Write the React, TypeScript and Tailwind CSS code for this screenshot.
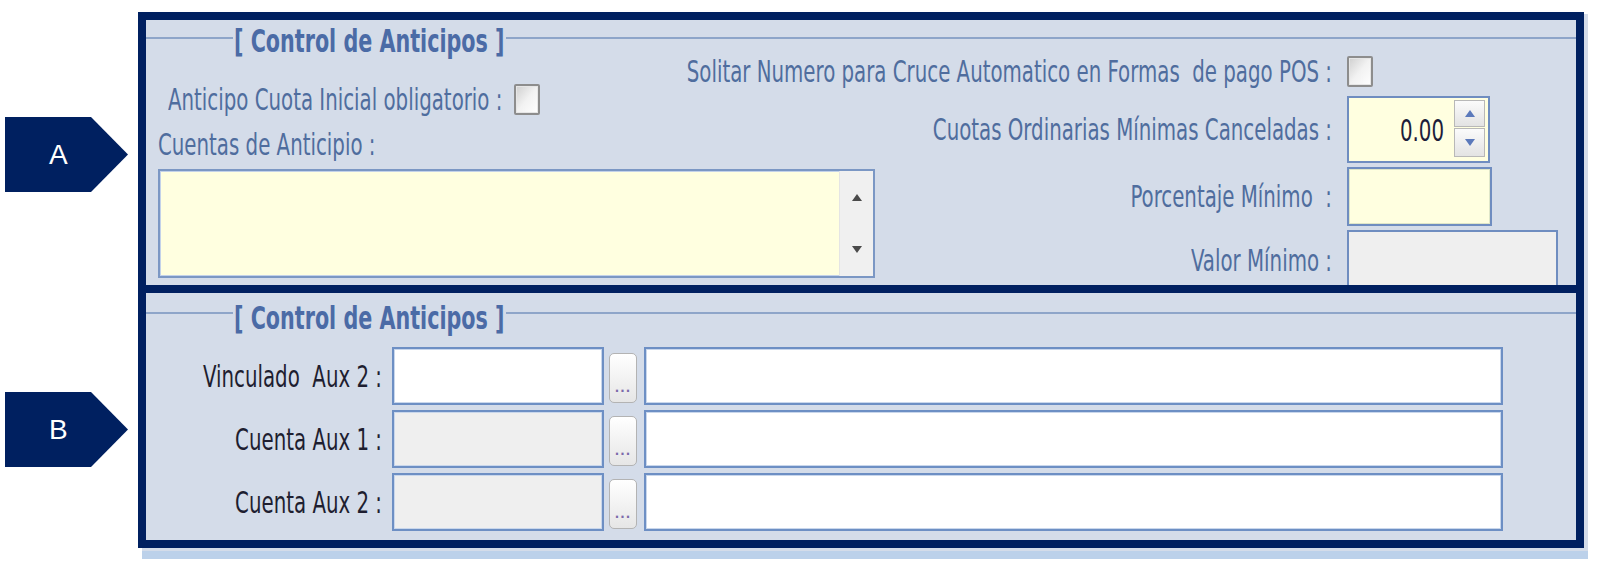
import type { ReactNode } from 'react';

const FONT = "font-['DejaVu_Sans_Condensed','DejaVu_Sans',sans-serif] [font-stretch:condensed]";

// glyphs in this form are drawn tall and narrow
function Txt({ children, className = '' }: { children: ReactNode; className?: string }) {
  return <span className={`inline-block shrink-0 scale-y-[1.35] whitespace-pre ${className}`}>{children}</span>;
}

function Marker({ letter, className = '' }: { letter: string; className?: string }) {
  return (
    <div
      className={`flex h-[75px] w-[123px] items-center bg-[#002060] pl-[44px] font-['Liberation_Sans',sans-serif] text-[28px] text-white [clip-path:polygon(0_0,86px_0,123px_50%,86px_100%,0_100%)] ${className}`}
    >
      {letter}
    </div>
  );
}

function GroupTitle({ height, offset }: { height: string; offset: string }) {
  return (
    <div className={`flex items-center ${height}`}>
      <div className="h-[2px] w-[87px] bg-[#8ea5c9]" />
      <Txt className={`px-[1px] text-[23px] font-bold text-[#4b6ba6] ${offset}`}>[ Control de Anticipos ]</Txt>
      <div className="h-[2px] flex-1 bg-[#8ea5c9]" />
    </div>
  );
}

function Checkbox() {
  return (
    <span className="block h-[31px] w-[26px] rounded-[2px] border-2 border-[#8d8d8d] bg-gradient-to-br from-[#cfcfcf] via-[#f2f2f2] to-white shadow-[inset_0_0_0_1px_#e6e6e6]" />
  );
}

function Arrow({ up }: { up?: boolean }) {
  return (
    <svg width="10" height="7" viewBox="0 0 10 7">
      <polygon points={up ? '5,0 10,7 0,7' : '0,0 10,0 5,7'} fill="currentColor" />
    </svg>
  );
}

function RightRow({ label, className = '', children }: { label: string; className?: string; children: ReactNode }) {
  return (
    <div className={`flex items-center ${className}`}>
      <div className="flex min-w-0 flex-1 justify-end">
        <Txt>{label}</Txt>
      </div>
      <div className="ml-[15px] flex h-full w-[211px] shrink-0 items-center">{children}</div>
    </div>
  );
}

function LookupRow({ label, locked }: { label: string; locked?: boolean }) {
  return (
    <div className="flex h-[58px]">
      <div className="flex w-[236px] items-center justify-end text-[#1e1e30]">
        <Txt>{label}</Txt>
      </div>
      <div
        className={`ml-[10px] w-[212px] border-2 border-[#6d8fc4] shadow-[inset_0_0_0_1px_#c9d7ec] ${locked ? 'bg-[#efefef]' : 'bg-white'}`}
      />
      <button className="mb-[2px] ml-[5px] mt-[6px] flex w-[28px] items-end justify-center rounded-[5px] border border-[#b3b3b3] bg-gradient-to-b from-white to-[#e6e6e6] pb-[8px] text-[13px] leading-none font-bold tracking-[1px] text-[#7c6aaa]">
        ...
      </button>
      <div className="ml-[7px] w-[859px] border-2 border-[#6d8fc4] bg-white shadow-[inset_0_0_0_1px_#c9d7ec]" />
    </div>
  );
}

export default function App() {
  return (
    <div className={`flex h-[571px] w-[1600px] bg-white ${FONT}`}>
      <div className="flex w-[138px] flex-col pl-[5px]">
        <Marker letter="A" className="mt-[117px]" />
        <Marker letter="B" className="mt-[200px]" />
      </div>

      <div className="mt-[12px] flex flex-col">
        <div className="w-[1446px] border-8 border-[#002060] bg-[#d4dce9] text-[22px] text-[#4f6d9e] shadow-[4px_2px_0_#d4dce9]">
          {/* Grupo A: checks, cuentas y mínimos */}
          <section className="h-[265px] overflow-hidden">
            <GroupTitle height="h-[35px]" offset="mt-[7px]" />
            <div className="flex">
              <div className="w-[729px] shrink-0 pl-[12px]">
                <div className="mt-[29px] flex h-[30px] items-center pl-[10px]">
                  <Txt>Anticipo Cuota Inicial obligatorio :</Txt>
                  <span className="ml-[12px]">
                    <Checkbox />
                  </span>
                </div>
                <div className="mt-[15px] flex h-[30px] items-center">
                  <Txt>Cuentas de Anticipio :</Txt>
                </div>
                <div className="mt-[10px] flex h-[109px] w-[717px] border-2 border-[#7b97c4] bg-[#ffffe0] shadow-[inset_0_0_0_1px_#c3d2e9]">
                  <div className="flex-1" />
                  <div className="flex w-[34px] flex-col items-center justify-between border-l border-[#e4e4e4] bg-[#f0f0f0] py-[23px] text-[#4a4a4a]">
                    <Arrow up />
                    <Arrow />
                  </div>
                </div>
              </div>

              <div className="flex min-w-0 flex-1 flex-col pr-[18px]">
                <RightRow label="Solitar Numero para Cruce Automatico en Formas  de pago POS :" className="h-[32px]">
                  <Checkbox />
                </RightRow>
                <RightRow label="Cuotas Ordinarias Mínimas Canceladas :" className="mt-[9px] h-[67px]">
                  <div className="flex h-full w-[143px] items-start border-2 border-[#6f8dc0] bg-[#ffffe0] pr-[3px] pt-[2px]">
                    <span className="flex h-full flex-1 items-center justify-end pr-[10px] text-[#1d1d3a]">
                      <Txt>0.00</Txt>
                    </span>
                    <div className="flex flex-col gap-[1px]">
                      <div className="flex h-[27px] w-[31px] items-center justify-center border border-[#b8b8b8] bg-gradient-to-b from-[#fbfbfb] to-[#e3e3e3] text-[#5b79bb]">
                        <Arrow up />
                      </div>
                      <div className="flex h-[29px] w-[31px] items-center justify-center border border-[#b8b8b8] bg-gradient-to-b from-[#fbfbfb] to-[#e3e3e3] text-[#5b79bb]">
                        <Arrow />
                      </div>
                    </div>
                  </div>
                </RightRow>
                <RightRow label="Porcentaje Mínimo  :" className="mt-[4px] h-[59px]">
                  <div className="h-full w-[145px] border-2 border-[#6f8dc0] bg-[#ffffe0] shadow-[inset_0_0_0_1px_#dfe6c8]" />
                </RightRow>
                <RightRow label="Valor Mínimo :" className="mt-[4px] h-[60px]">
                  <div className="h-full w-[211px] border-2 border-[#6f8dc0] bg-[#efefef]" />
                </RightRow>
              </div>
            </div>
          </section>

          <div className="h-[8px] bg-[#002060]" />

          {/* Grupo B: vínculos auxiliares */}
          <section className="h-[247px]">
            <GroupTitle height="h-[40px]" offset="mt-[10px]" />
            <div className="mt-[14px] flex flex-col gap-[5px]">
              <LookupRow label="Vinculado  Aux 2 :" />
              <LookupRow label="Cuenta Aux 1 :" locked />
              <LookupRow label="Cuenta Aux 2 :" locked />
            </div>
          </section>
        </div>
        <div className="ml-[4px] flex w-[1446px] flex-col">
          <div className="h-[3px] bg-[#d4dce9]" />
          <div className="h-[8px] bg-[#bcd1ea]" />
        </div>
      </div>
    </div>
  );
}
